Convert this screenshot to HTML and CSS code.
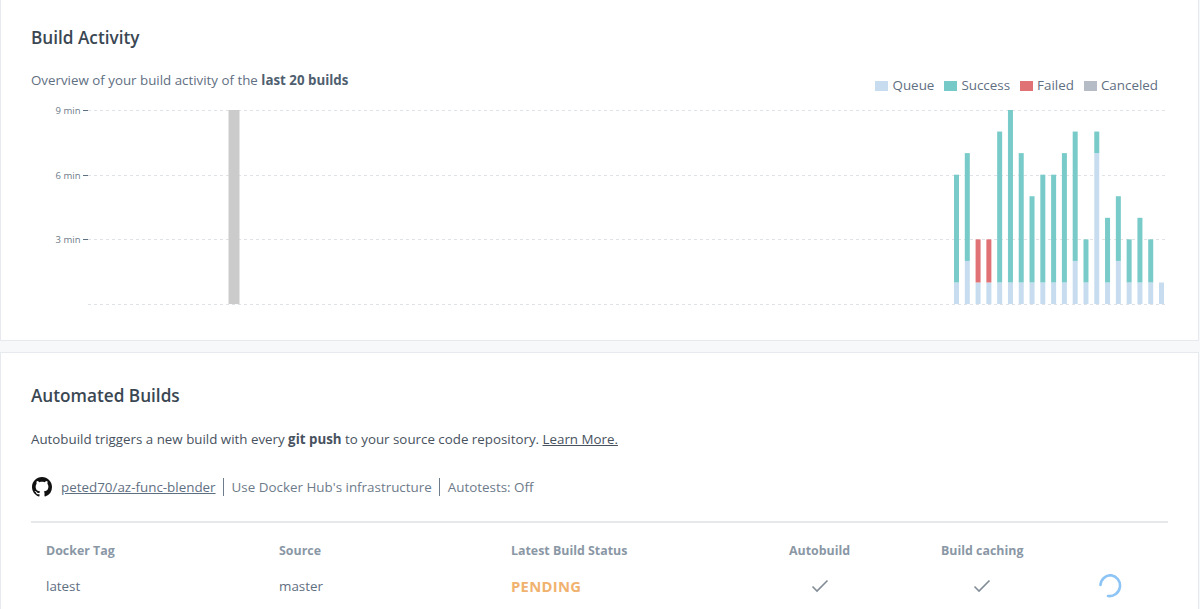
FILE: index.html
```html
<!DOCTYPE html>
<html lang="en">
<head>
<meta charset="utf-8">
<title>Builds</title>
<link rel="stylesheet" href="styles.css">
</head>
<body>
<main class="page">
  <section class="panel panel-activity">
    <h2 class="title">Build Activity</h2>
    <div class="overview-row">
      <p class="lead">Overview of your build activity of the <strong>last 20 builds</strong></p>
      <ul class="legend">
        <li class="legend-item"><span class="swatch swatch-queue"></span>Queue</li>
        <li class="legend-item"><span class="swatch swatch-success"></span>Success</li>
        <li class="legend-item"><span class="swatch swatch-failed"></span>Failed</li>
        <li class="legend-item"><span class="swatch swatch-canceled"></span>Canceled</li>
      </ul>
    </div>
    <svg class="chart" id="chart" width="1198" height="210" viewBox="0 0 1198 210" role="img" aria-label="Build activity chart"></svg>
  </section>
  <section class="panel panel-builds">
    <h2 class="title">Automated Builds</h2>
    <p class="lead lead-builds">Autobuild triggers a new build with every <strong>git push</strong> to your source code repository. <a class="link" href="#">Learn More.</a></p>
    <div class="repo-row">
      <svg class="gh-icon" viewBox="0 0 16 16" width="20" height="20" aria-hidden="true"><path fill="#111" d="M8 0C3.58 0 0 3.58 0 8c0 3.54 2.29 6.53 5.47 7.59.4.07.55-.17.55-.38 0-.19-.01-.82-.01-1.49-2.01.37-2.53-.49-2.69-.94-.09-.23-.48-.94-.82-1.13-.28-.15-.68-.52-.01-.53.63-.01 1.08.58 1.23.82.72 1.21 1.87.87 2.33.66.07-.52.28-.87.51-1.07-1.78-.2-3.64-.89-3.64-3.95 0-.87.31-1.59.82-2.15-.08-.2-.36-1.02.08-2.12 0 0 .67-.21 2.2.82.64-.18 1.32-.27 2-.27s1.36.09 2 .27c1.53-1.04 2.2-.82 2.2-.82.44 1.1.16 1.92.08 2.12.51.56.82 1.27.82 2.15 0 3.07-1.87 3.75-3.65 3.95.29.25.54.73.54 1.48 0 1.07-.01 1.93-.01 2.2 0 .21.15.46.55.38A8.01 8.01 0 0 0 16 8c0-4.42-3.58-8-8-8z"/></svg>
      <a class="repo-link" href="#">peted70/az-func-blender</a>
      <span class="repo-note">Use Docker Hub's infrastructure</span>
      <span class="repo-note">Autotests: Off</span>
    </div>
    <div class="build-table">
      <div class="row row-head">
        <span>Docker Tag</span>
        <span>Source</span>
        <span>Latest Build Status</span>
        <span>Autobuild</span>
        <span>Build caching</span>
        <span></span>
      </div>
      <div class="row row-body">
        <span>latest</span>
        <span>master</span>
        <span class="status">PENDING</span>
        <span class="cell-check"><svg class="check" viewBox="0 0 18 14" width="18" height="14" aria-hidden="true"><path d="M1.5 7.5 L6 12 L16.5 1.5"/></svg></span>
        <span class="cell-check cell-check-cache"><svg class="check" viewBox="0 0 18 14" width="18" height="14" aria-hidden="true"><path d="M1.5 7.5 L6 12 L16.5 1.5"/></svg></span>
        <span class="cell-spin"><svg class="spinner" viewBox="0 0 24 24" width="24" height="24" aria-hidden="true"><path d="M1.5 11 A10.5 10.5 0 0 1 12 1.2 A10.5 10.5 0 1 1 9 22"/></svg></span>
      </div>
    </div>
  </section>
</main>
<script src="chart.js"></script>
</body>
</html>
```

FILE: chart.js
```js
(function () {
  var NS = 'http://www.w3.org/2000/svg';
  var svg = document.getElementById('chart');
  var TOP = 13, PER_MIN = 21.56, ZERO = TOP + 9 * PER_MIN;
  function y(m) { return ZERO - m * PER_MIN; }
  function el(name, attrs, text) {
    var n = document.createElementNS(NS, name);
    for (var k in attrs) n.setAttribute(k, attrs[k]);
    if (text) n.textContent = text;
    svg.appendChild(n);
  }
  [[9, '9 min'], [6, '6 min'], [3, '3 min'], [0, '']].forEach(function (t) {
    var py = Math.round(y(t[0])) + 0.5;
    el('line', { x1: 88, x2: 1167, y1: py, y2: py, 'class': 'grid' });
    if (t[1]) {
      el('line', { x1: 83, x2: 88, y1: py, y2: py, 'class': 'tick' });
      el('text', { x: 80.5, y: py + 3, 'class': 'axis' }, t[1]);
    }
  });
  el('rect', { x: 228.5, y: y(9), width: 11, height: 9 * PER_MIN, 'class': 'bar-canceled-old' });
  var bars = [[1,6,'s'],[2,7,'s'],[1,3,'f'],[1,3,'f'],[1,8,'s'],[1,9,'s'],[1,7,'s'],[1,5,'s'],[1,6,'s'],[1,6,'s'],
              [1,7,'s'],[2,8,'s'],[1,3,'s'],[7,8,'s'],[1,4,'s'],[2,5,'s'],[1,3,'s'],[1,4,'s'],[1,3,'s'],[1,1,'s']];
  bars.forEach(function (b, i) {
    var x = 954 + i * 10.79;
    el('rect', { x: x, y: y(b[0]), width: 5, height: b[0] * PER_MIN, 'class': 'bar-queue' });
    if (b[1] > b[0]) {
      el('rect', { x: x, y: y(b[1]), width: 5, height: (b[1] - b[0]) * PER_MIN, 'class': b[2] === 'f' ? 'bar-failed' : 'bar-success' });
    }
  });
})();
```

FILE: styles.css
```css
* { box-sizing: border-box; }
html, body { margin: 0; padding: 0; }
body {
  width: 1200px;
  height: 609px;
  overflow: hidden;
  background: #f7f8fa;
  font-family: "Open Sans", "Noto Sans", sans-serif;
  color: #5f6f82;
}
.page { display: flex; flex-direction: column; gap: 11px; padding: 0 1px 0 0; }
.panel {
  background: #fff;
  border: 1px solid #e6e9ed;
  border-top: 0;
  padding: 0 30px;
}
.panel-activity { height: 341px; padding: 28px 30px 0; }
.panel-builds { border-top: 1px solid #e6e9ed; border-bottom: 0; padding-top: 33px; height: 257px; }
.title {
  margin: 0;
  font-size: 17.2px;
  line-height: 20px;
  font-weight: 600;
  color: #3a4753;
}
.overview-row {
  display: flex;
  justify-content: space-between;
  align-items: flex-start;
  margin-top: 22px;
}
.lead { margin: 0; font-size: 13.34px; line-height: 20px; color: #5f6f82; }
.lead strong { font-weight: 700; color: #4f5f70; }
.lead-builds { margin-top: 23px; color: #47525e; }
.lead-builds strong { color: #47525e; }
.link { color: #47525e; text-decoration: underline; }
.legend {
  list-style: none;
  display: flex;
  gap: 10px;
  margin: 5px 10px 0 0;
  padding: 0;
  font-size: 13.4px;
  line-height: 20px;
}
.legend-item { display: flex; align-items: center; gap: 4px; }
.swatch { width: 13px; height: 10px; display: block; margin-top: 2px; }
.swatch-queue { background: #c7ddef; }
.swatch-success { background: #75cac7; }
.swatch-failed { background: #e07276; }
.swatch-canceled { background: #b5bcc5; }
.chart { display: block; margin: 2px 0 0 -31px; }
.grid { stroke: #dfe2e6; stroke-width: 1; stroke-dasharray: 3 3; }
.tick { stroke: #5f6f82; stroke-width: 1; }
.axis { font-size: 9.5px; fill: #6d7b8a; text-anchor: end; font-family: "Open Sans", sans-serif; }
.bar-canceled-old { fill: #cbcbcb; }
.bar-queue { fill: #c7ddef; }
.bar-success { fill: #78cbc8; }
.bar-failed { fill: #e07276; }
.repo-row {
  display: flex;
  align-items: center;
  margin-top: 28px;
  height: 20px;
  font-size: 13.4px;
  color: #6d7b8a;
}
.gh-icon { margin: 0 9px 0 1px; }
.repo-link { color: #5f6f82; text-decoration: underline; }
.repo-note { border-left: 1px solid #6d7b8a; margin-left: 7px; padding-left: 8px; line-height: 18px; }
.build-table { margin-top: 24px; border-top: 2px solid #e6e8eb; }
.row {
  display: grid;
  grid-template-columns: 233px 232px 278px 152px 152px 1fr;
  padding-left: 15px;
  font-size: 13.4px;
}
.row-head { font-weight: 700; font-size: 12.4px; color: #8a97a5; line-height: 20px; padding-top: 18px; }
.row-body { align-items: center; margin-top: 13px; height: 20px; color: #5f6f82; }
.status { color: #f0b26e; font-weight: 700; font-size: 14.8px; letter-spacing: 0.3px; }
.cell-check { display: flex; padding-left: 22px; }
.cell-check-cache { padding-left: 32px; }
.check { fill: none; stroke: #818c96; stroke-width: 1.6; }
.cell-spin { display: flex; padding-left: 6px; }
.spinner { fill: none; stroke: #8cc4f5; stroke-width: 2.6; stroke-linecap: round; }
```
